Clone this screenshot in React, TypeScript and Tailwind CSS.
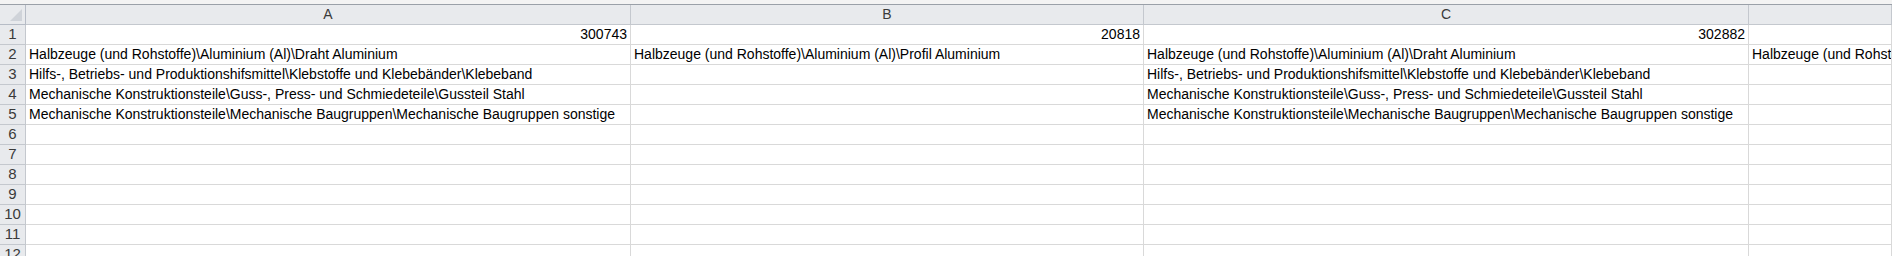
import React from 'react';

const rows: string[][] = [
  ['300743', '20818', '302882', ''],
  [
    'Halbzeuge (und Rohstoffe)\\Aluminium (Al)\\Draht Aluminium',
    'Halbzeuge (und Rohstoffe)\\Aluminium (Al)\\Profil Aluminium',
    'Halbzeuge (und Rohstoffe)\\Aluminium (Al)\\Draht Aluminium',
    'Halbzeuge (und Rohstoffe)\\Aluminium (Al)\\Draht Aluminium',
  ],
  [
    'Hilfs-, Betriebs- und Produktionshifsmittel\\Klebstoffe und Klebebänder\\Klebeband',
    '',
    'Hilfs-, Betriebs- und Produktionshifsmittel\\Klebstoffe und Klebebänder\\Klebeband',
    '',
  ],
  [
    'Mechanische Konstruktionsteile\\Guss-, Press- und Schmiedeteile\\Gussteil Stahl',
    '',
    'Mechanische Konstruktionsteile\\Guss-, Press- und Schmiedeteile\\Gussteil Stahl',
    '',
  ],
  [
    'Mechanische Konstruktionsteile\\Mechanische Baugruppen\\Mechanische Baugruppen sonstige',
    '',
    'Mechanische Konstruktionsteile\\Mechanische Baugruppen\\Mechanische Baugruppen sonstige',
    '',
  ],
  ['', '', '', ''],
  ['', '', '', ''],
  ['', '', '', ''],
  ['', '', '', ''],
  ['', '', '', ''],
  ['', '', '', ''],
  ['', '', '', ''],
];

const cols = ['A', 'B', 'C', ''];
const gridCols = 'grid grid-cols-[26px_605px_513px_605px_1fr]';

const App: React.FC = () => {
  return (
    <div className="w-[1892px] h-[256px] overflow-hidden bg-white font-['Liberation_Sans',Arial,sans-serif] text-[14px] text-black">
      {/* top strip */}
      <div className="h-[5px] bg-[#f3f3f3] border-b border-[#9aa0a8]" />

      {/* column headers */}
      <div className={gridCols}>
        <div className="relative h-[20px] bg-[#e8eaed] border-r border-b border-[#b6bcc6]">
          <div className="absolute right-[3px] bottom-[3px] w-0 h-0 border-l-[12px] border-l-transparent border-b-[12px] border-b-[#cfd3d9]" />
        </div>
        {cols.map((c, i) => (
          <div
            key={i}
            className="h-[20px] bg-[#e8eaed] border-r border-b border-[#c4c8ce] flex items-center justify-center text-[#3a3a3a]"
          >
            {c}
          </div>
        ))}
      </div>

      {/* body rows */}
      {rows.map((r, ri) => (
        <div key={ri} className={gridCols}>
          <div className="h-[20px] bg-[#e8eaed] border-r border-b border-[#c4c8ce] flex items-center justify-center text-[15px] text-[#3a3a3a]">
            {ri + 1}
          </div>
          {r.map((v, ci) => (
            <div
              key={ci}
              className={`h-[20px] border-r border-b border-[#d9d9d9] flex items-center whitespace-nowrap overflow-hidden px-[3px] ${
                ri === 0 ? 'justify-end' : 'justify-start'
              }`}
            >
              {v}
            </div>
          ))}
        </div>
      ))}
    </div>
  );
};

export default App;
